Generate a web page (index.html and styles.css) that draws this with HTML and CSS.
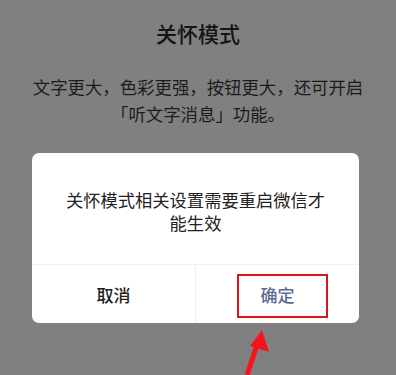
FILE: index.html
```html
<!DOCTYPE html>
<html lang="zh-CN">
<head>
  <meta charset="UTF-8" />
  <meta name="viewport" content="width=device-width, initial-scale=1.0" />
  <title>关怀模式</title>
  <link rel="stylesheet" href="styles.css">
</head>
<body>
  <div class="intro">
    <h1 class="title">关怀模式</h1>
    <p class="desc">文字更大，色彩更强，按钮更大，还可开启<br>「听文字消息」功能。</p>
  </div>

  <div class="dialog">
    <div class="message">关怀模式相关设置需要重启微信才能生效</div>
    <div class="actions">
      <div class="btn cancel">取消</div>
      <div class="btn ok">确定</div>
    </div>
    <div class="mark"></div>
  </div>

  <svg class="arrow" width="40" height="50" viewBox="0 0 40 50">
    <path d="M12 50 L22 20" stroke="#f5141c" stroke-width="5" fill="none" />
    <polygon points="27,5 34,27 15,21" fill="#f5141c" />
  </svg>
</body>
</html>
```

FILE: styles.css
```css
body {
  margin: 0;
  background-color: #808080;
  font-family: "Noto Sans CJK SC", "Noto Sans", sans-serif;
  color: #141414;
  height: 375px;
  overflow: hidden;
  position: relative;
}

.intro {
  text-align: center;
  padding-top: 19px;
}

.title {
  margin: 0;
  font-size: 21px;
  line-height: 28px;
  font-weight: 500;
}

.desc {
  margin: 26px 0 0;
  font-size: 17.4px;
  line-height: 27px;
  color: #1c1c1c;
}

.dialog {
  position: relative;
  width: 327px;
  margin: 26px 0 0 32px;
  background-color: #fff;
  border-radius: 7px;
}

.message {
  padding: 35px 30px 30px;
  font-size: 17.3px;
  line-height: 23px;
  text-align: center;
  color: #222;
}

.actions {
  display: flex;
  border-top: 1px solid #f0f0f0;
}

.btn {
  flex: 1;
  height: 58px;
  display: flex;
  justify-content: center;
  align-items: center;
  font-size: 17px;
  font-weight: 500;
}

.cancel {
  color: #1e1e1e;
  border-right: 1px solid #f0f0f0;
}

.ok {
  color: #5b6b92;
}

.mark {
  position: absolute;
  left: 205px;
  top: 121px;
  width: 87px;
  height: 40px;
  border: 2.5px solid #d9141b;
}

.arrow {
  position: absolute;
  left: 235px;
  top: 325px;
}
```
